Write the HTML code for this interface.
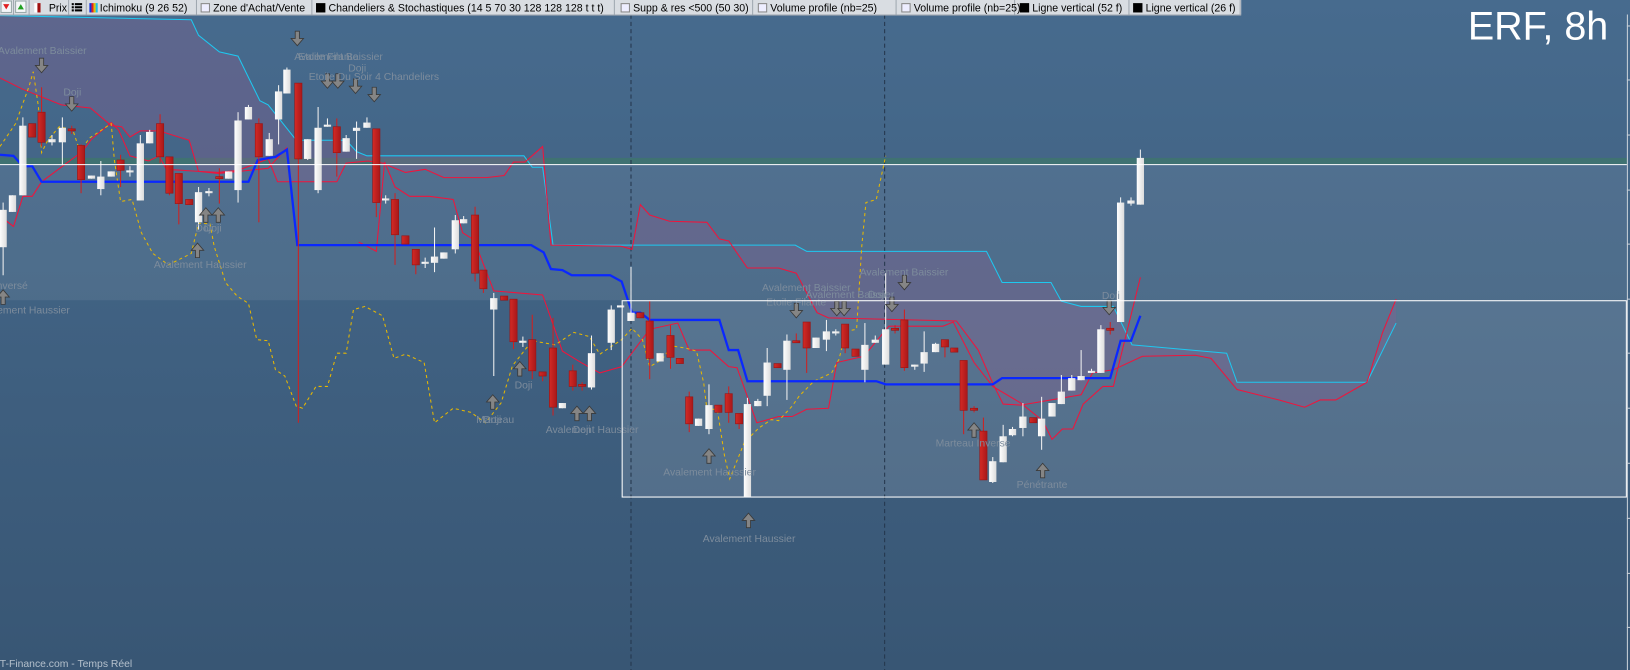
<!DOCTYPE html>
<html><head><meta charset="utf-8">
<style>
html,body{margin:0;padding:0;width:1630px;height:670px;overflow:hidden;background:#3f5f80;}
svg{display:block}
text{font-family:"Liberation Sans",sans-serif}
</style></head>
<body>
<svg id="s" width="1630" height="670" viewBox="0 0 1568 645" preserveAspectRatio="none" xmlns="http://www.w3.org/2000/svg">
<defs>
<linearGradient id="bg" x1="0" y1="0" x2="0" y2="1">
<stop offset="0" stop-color="#476b8e"/><stop offset="1" stop-color="#385674"/>
</linearGradient>
<linearGradient id="wb" x1="0" x2="1"><stop offset="0" stop-color="#ffffff"/><stop offset="1" stop-color="#dcdcdc"/></linearGradient>
<linearGradient id="rb" x1="0" x2="1"><stop offset="0" stop-color="#d42a25"/><stop offset="1" stop-color="#a8181a"/></linearGradient>
</defs>
<rect x="0" y="0" width="1568" height="645" fill="url(#bg)"/>
<rect x="0" y="159" width="1565" height="130" fill="#ffffff" fill-opacity="0.07"/>
<rect x="0" y="152" width="1565" height="6" fill="#3f7272"/>
<rect x="598" y="289" width="967" height="189" fill="#ffffff" fill-opacity="0.12"/>
<g id="clouds"></g>
<line x1="607" y1="14" x2="607" y2="645" stroke="#24364c" stroke-dasharray="4,3"/>
<line x1="851" y1="14" x2="851" y2="645" stroke="#24364c" stroke-dasharray="4,3"/>
<g id="lines"></g>
<g id="candles"></g>
<g id="marks" font-size="10" fill="#7d8c9c"></g>
<line x1="0" y1="158.5" x2="1565" y2="158.5" stroke="#fff" stroke-width="1"/>
<rect x="598.5" y="289.5" width="966" height="189" fill="none" stroke="#fff" stroke-width="1"/>
<line x1="1565.5" y1="14" x2="1565.5" y2="645" stroke="#c8d0d8" stroke-width="1"/>
<g stroke="#c8d0d8"><line x1="1565" y1="25" x2="1568" y2="25"/><line x1="1565" y1="77" x2="1568" y2="77"/><line x1="1565" y1="130" x2="1568" y2="130"/><line x1="1565" y1="183" x2="1568" y2="183"/><line x1="1565" y1="235" x2="1568" y2="235"/><line x1="1565" y1="288" x2="1568" y2="288"/><line x1="1565" y1="340" x2="1568" y2="340"/><line x1="1565" y1="393" x2="1568" y2="393"/><line x1="1565" y1="446" x2="1568" y2="446"/><line x1="1565" y1="499" x2="1568" y2="499"/><line x1="1565" y1="552" x2="1568" y2="552"/><line x1="1565" y1="604" x2="1568" y2="604"/></g>
<text x="1412" y="38" font-size="38" fill="#ffffff">ERF, 8h</text>
<text x="-3" y="642" font-size="10" fill="#b4c0cc">IT-Finance.com - Temps Réel</text>
<rect x="0" y="0" width="1194" height="14" fill="#d9dde2"/>
<line x1="0" y1="14.5" x2="1194" y2="14.5" stroke="#9aa4ae"/>
<g stroke="#a0a8b0">
<line x1="13" y1="0" x2="13" y2="14"/><line x1="28" y1="0" x2="28" y2="14"/><line x1="66" y1="0" x2="66" y2="14"/><line x1="83" y1="0" x2="83" y2="14"/><line x1="189" y1="0" x2="189" y2="14"/><line x1="300" y1="0" x2="300" y2="14"/><line x1="591" y1="0" x2="591" y2="14"/><line x1="724" y1="0" x2="724" y2="14"/><line x1="862" y1="0" x2="862" y2="14"/><line x1="976" y1="0" x2="976" y2="14"/><line x1="1086" y1="0" x2="1086" y2="14"/><line x1="1193" y1="0" x2="1193" y2="14"/>
</g>
<rect x="1" y="1" width="10" height="11" fill="#f4f6f8" stroke="#9aa"/>
<path d="M3 4h6l-3 5z" fill="#e02020"/>
<rect x="15" y="1" width="10" height="11" fill="#f4f6f8" stroke="#9aa"/>
<path d="M17 9h6l-3-5z" fill="#20a020"/>
<rect x="33" y="3" width="3" height="9" fill="#fff"/><rect x="36" y="3" width="3" height="9" fill="#a01010"/>
<g fill="#000"><rect x="69" y="3" width="2" height="2"/><rect x="72" y="3" width="7" height="2"/><rect x="69" y="6" width="2" height="2"/><rect x="72" y="6" width="7" height="2"/><rect x="69" y="9" width="2" height="2"/><rect x="72" y="9" width="7" height="2"/></g>
<rect x="86" y="3" width="2" height="9" fill="#1030e0"/><rect x="88" y="3" width="2" height="9" fill="#e02020"/><rect x="90" y="3" width="2" height="9" fill="#e0c000"/><rect x="92" y="3" width="2" height="9" fill="#20c0e0"/>
<rect x="193.5" y="3.5" width="8" height="8" fill="#eef" stroke="#888"/>
<rect x="304" y="3" width="9" height="9" fill="#000"/>
<rect x="597.5" y="3.5" width="8" height="8" fill="#eef" stroke="#888"/>
<rect x="729.5" y="3.5" width="8" height="8" fill="#eef" stroke="#888"/>
<rect x="867.5" y="3.5" width="8" height="8" fill="#eef" stroke="#888"/>
<rect x="981" y="3" width="9" height="9" fill="#000"/>
<rect x="1090" y="3" width="9" height="9" fill="#000"/>
<g font-size="10.2" fill="#000">
<text x="47" y="11">Prix</text>
<text x="96" y="11">Ichimoku (9 26 52)</text>
<text x="205" y="11">Zone d'Achat/Vente</text>
<text x="316" y="11">Chandeliers &amp; Stochastiques (14 5 70 30 128 128 128 t t t)</text>
<text x="609" y="11">Supp &amp; res &lt;500 (50 30)</text>
<text x="741" y="11">Volume profile (nb=25)</text>
<text x="879" y="11">Volume profile (nb=25)</text>
<text x="993" y="11">Ligne vertical (52 f)</text>
<text x="1102" y="11">Ligne vertical (26 f)</text>
</g>
</svg>
<script>
var NS="http://www.w3.org/2000/svg";
function el(p,t,a){var e=document.createElementNS(NS,t);for(var k in a)e.setAttribute(k,a[k]);document.getElementById(p).appendChild(e);return e;}
function pts(a){return a.map(function(p){return p.join(",")}).join(" ");}
var cyan=[[0,15],[184,19],[191,34],[211,50],[229,54],[250,97],[258,101],[285,135],[333,135],[343,146],[353,150],[504,150],[512,161],[522,161],[532,236],[765,236],[776,242],[949,242],[964,272],[1011,272],[1021,290],[1040,295],[1071,295],[1089,332],[1100,333],[1180,340],[1190,368],[1315,368],[1343,311]];
var senA=[[0,75],[22,86],[59,101],[87,104],[107,121],[117,122],[125,132],[135,126],[153,126],[182,135],[191,165],[210,166],[229,164],[258,153],[267,175],[324,175],[333,157],[354,155],[368,157],[390,166],[409,163],[427,171],[468,171],[485,169],[494,156],[505,156],[522,141],[530,236],[597,237],[608,240],[616,197],[625,207],[644,213],[680,214],[692,230],[701,232],[719,258],[749,258],[766,263],[786,301],[797,306],[920,309],[941,337],[955,369],[965,389],[982,390],[1040,380],[1051,359],[1071,356],[1099,343],[1150,342],[1165,345],[1190,375],[1230,385],[1255,392],[1270,385],[1285,385],[1315,368],[1330,320],[1343,288]];
var cl=cyan.concat(senA.slice().reverse());
el("clouds","polygon",{points:pts(cl),fill:"#8a5f8f","fill-opacity":"0.35","fill-rule":"evenodd"});
var red2a=[[0,208],[13,218],[22,189],[31,189],[40,175],[79,146],[88,134],[107,118],[114,125],[125,150],[143,155],[153,150],[160,163],[191,165],[210,167],[230,165],[258,162],[276,142]];
var red2b=[[345,233],[353,237],[362,242],[370,156],[380,180],[394,189],[413,189],[436,192],[445,224],[456,231],[475,280],[522,284],[541,338],[559,349],[577,359],[598,353],[625,317],[652,311],[663,337],[683,337],[701,353],[709,354],[728,407],[749,401],[762,401],[776,394],[797,393],[805,349],[831,343],[855,314],[907,314],[917,310],[937,349],[955,372],[982,388],[1003,405],[1012,423],[1022,413],[1032,413],[1042,389],[1061,372],[1071,372],[1097,267]];
var blue=[[0,149],[13,150],[22,160],[31,160],[40,175],[239,175],[248,154],[265,151],[276,144],[286,236],[511,236],[523,243],[530,259],[541,260],[550,265],[587,265],[598,271],[608,301],[616,301],[625,308],[692,308],[701,337],[710,337],[719,367],[843,367],[852,370],[955,370],[964,364],[1068,364],[1078,328],[1088,328],[1097,304]];
var yel=[[0,141],[15,119],[28,83],[32,69],[37,103],[40,147],[46,135],[57,122],[70,125],[77,146],[86,133],[107,119],[110,154],[116,194],[127,192],[136,224],[147,244],[162,255],[184,244],[191,215],[202,215],[206,237],[217,272],[228,285],[239,292],[247,327],[258,328],[265,356],[274,362],[285,391],[291,393],[304,372],[315,372],[324,340],[333,340],[340,298],[351,295],[368,304],[379,345],[390,341],[408,349],[418,407],[436,393],[453,397],[467,407],[482,388],[493,352],[512,328],[534,332],[552,320],[567,324],[577,341],[598,327],[608,316],[618,327],[625,353],[637,346],[646,333],[659,335],[670,338],[677,369],[680,394],[690,394],[697,439],[702,461],[716,426],[730,412],[742,404],[749,405],[762,391],[769,381],[783,367],[800,359],[807,346],[814,319],[824,317],[829,237],[833,195],[843,192],[852,150]];
el("lines","polyline",{points:pts(cyan),fill:"none",stroke:"#1ec8f0","stroke-width":"1"});
el("lines","polyline",{points:pts(senA),fill:"none",stroke:"#f0143c","stroke-width":"1"});
el("lines","polyline",{points:pts(red2a),fill:"none",stroke:"#f0143c","stroke-width":"1"});
el("lines","polyline",{points:pts(red2b),fill:"none",stroke:"#f0143c","stroke-width":"1"});
el("lines","polyline",{points:pts(yel),fill:"none",stroke:"#e8b800","stroke-width":"1","stroke-dasharray":"3,3"});
el("lines","polyline",{points:pts(blue),fill:"none",stroke:"#0a28ff","stroke-width":"2.2"});
var C=[[3,202,238,195,265,'w'],[12,188,204,188,204,'w'],[22,121,188,113,188,'w'],[31,119,132,119,132,'r'],[40,108,137,84,141,'r'],[50,134,137,130,140,'w'],[60,123,137,113,159,'w'],[69,124,126,121,129,'r'],[78,140,173,139,186,'r'],[88,169,172,169,172,'w'],[97,170,182,155,188,'w'],[107,165,170,165,170,'w'],[116,154,164,149,180,'r'],[125,164,166,160,170,'w'],[135,138,193,130,193,'w'],[144,127,138,125,138,'w'],[154,119,151,110,157,'r'],[163,151,186,151,188,'r'],[172,167,196,167,216,'r'],[182,192,197,192,197,'r'],[191,185,214,180,221,'w'],[201,184,186,181,189,'w'],[211,170,172,162,196,'r'],[220,165,172,165,172,'w'],[229,116,183,108,195,'w'],[239,103,115,101,115,'w'],[249,119,151,114,214,'r'],[259,134,150,128,150,'w'],[268,88,115,82,139,'w'],[276,67,90,65,90,'w'],[287,80,153,80,407,'r'],[296,134,153,134,154,'w'],[306,123,183,103,186,'w'],[315,120,122,114,122,'w'],[324,122,147,114,170,'r'],[333,133,146,130,146,'w'],[343,123,126,117,153,'w'],[353,118,123,113,123,'w'],[362,124,195,124,209,'r'],[371,191,193,188,196,'w'],[380,192,226,186,255,'r'],[390,227,235,227,235,'r'],[400,240,255,240,264,'r'],[409,252,254,248,258,'w'],[418,247,253,219,262,'w'],[427,243,249,243,249,'w'],[438,212,240,207,244,'w'],[446,211,215,208,215,'w'],[457,207,263,199,271,'r'],[465,260,278,260,282,'r'],[475,287,298,282,362,'w'],[485,285,289,285,289,'r'],[494,288,329,288,336,'r'],[503,328,330,324,334,'w'],[512,327,357,303,365,'r'],[522,358,362,358,367,'r'],[532,335,392,306,400,'r'],[541,388,393,388,393,'w'],[551,357,372,351,376,'r'],[560,370,372,368,376,'r'],[569,340,373,323,375,'w'],[588,298,330,294,337,'w'],[597,294,296,294,296,'w'],[607,301,309,257,309,'w'],[616,301,306,301,306,'r'],[625,309,345,290,365,'r'],[635,340,348,340,348,'w'],[645,323,344,313,355,'r'],[654,345,350,345,350,'r'],[663,382,408,377,416,'r'],[672,403,410,403,410,'w'],[682,390,413,370,418,'w'],[691,390,397,390,397,'r'],[701,379,397,372,407,'r'],[711,398,408,398,413,'r'],[719,389,478,383,478,'w'],[729,386,391,384,391,'w'],[738,349,381,335,391,'w'],[748,350,354,350,354,'r'],[757,328,356,322,385,'w'],[766,328,330,321,330,'r'],[776,310,335,310,359,'r'],[785,325,335,325,335,'w'],[795,319,327,308,338,'w'],[804,319,321,317,323,'w'],[813,312,335,312,340,'r'],[823,336,343,336,343,'r'],[832,332,356,311,368,'w'],[842,327,330,323,330,'w'],[852,317,351,263,351,'w'],[861,316,318,313,321,'r'],[870,308,354,298,357,'r'],[880,351,353,351,356,'w'],[889,339,350,319,358,'w'],[900,331,339,330,339,'w'],[909,327,334,327,344,'r'],[918,335,339,335,339,'r'],[927,347,395,347,418,'r'],[937,393,395,391,397,'r'],[946,415,462,402,462,'r'],[955,444,464,440,465,'w'],[965,420,445,409,445,'w'],[974,413,419,411,420,'w'],[984,401,412,388,420,'w'],[994,402,407,402,407,'r'],[1002,403,420,382,433,'w'],[1012,388,401,388,401,'w'],[1021,377,389,361,389,'w'],[1031,364,376,361,376,'w'],[1040,362,366,337,366,'w'],[1050,357,359,355,359,'w'],[1059,317,359,313,359,'w'],[1068,316,318,310,322,'r'],[1078,195,310,190,310,'w'],[1088,193,196,190,198,'w'],[1097,152,197,144,197,'w']];
C.forEach(function(c){
 var w=c[5]=='w';var col=w?"#f2f2f2":"#d02020";
 el("candles","line",{x1:c[0],x2:c[0],y1:c[3],y2:c[4],stroke:col,"stroke-width":"1"});
 var h=Math.max(c[2]-c[1],1.5);
 el("candles","rect",{x:c[0]-3.5,y:c[1],width:7,height:h,fill:w?"url(#wb)":"url(#rb)",stroke:w?"none":"#9a1414","stroke-width":"0.6"});
});
function arrow(x,y,down){
 var d=down?"M"+(x-2)+" "+y+"h4v7h4l-6 7l-6-7h4z":"M"+(x-2)+" "+(y+14)+"h4v-7h4l-6-7l-6 7h4z";
 el("marks","path",{d:d,fill:"#858585",stroke:"#3a3a3a","stroke-width":"0.8"});
}
function lab(x,y,t){var e=el("marks","text",{x:x,y:y});e.textContent=t;}
[[40,56],[69,93],[286,30],[315,71],[325,71],[342,76],[360,84],[766,292],[805,290],[812,290],[858,286],[870,265],[1067,289]].forEach(function(a){arrow(a[0],a[1],true)});
[[198,200],[210,200],[190,234],[3,279],[474,380],[500,348],[555,391],[567,391],[682,432],[720,494],[937,407],[1003,446]].forEach(function(a){arrow(a[0],a[1],false)});
lab(-2,52,"Avalement Baissier");lab(61,92,"Doji");
lab(283,58,"Avalement Baissier");lab(287,58,"Etoile Filante");lab(335,69,"Doji");lab(297,77,"Etoile Du Soir 4 Chandeliers");
lab(188,223,"Doji");lab(196,223,"Doji");lab(148,258,"Avalement Haussier");
lab(-6,278,"Inversé");lab(-22,302,"Avalement Haussier");
lab(458,407,"Marteau");lab(465,407,"Doji");lab(495,374,"Doji");
lab(525,417,"Avalement Haussier");lab(551,417,"Doji");
lab(733,280,"Avalement Baissier");lab(775,287,"Avalement Baissier");lab(737,294,"Etoile Filante");lab(835,287,"Doji");
lab(827,265,"Avalement Baissier");
lab(638,458,"Avalement Haussier");lab(676,522,"Avalement Haussier");
lab(900,430,"Marteau Inverse");lab(978,470,"Pénétrante");lab(1060,288,"Doji");
</script>
</body></html>
